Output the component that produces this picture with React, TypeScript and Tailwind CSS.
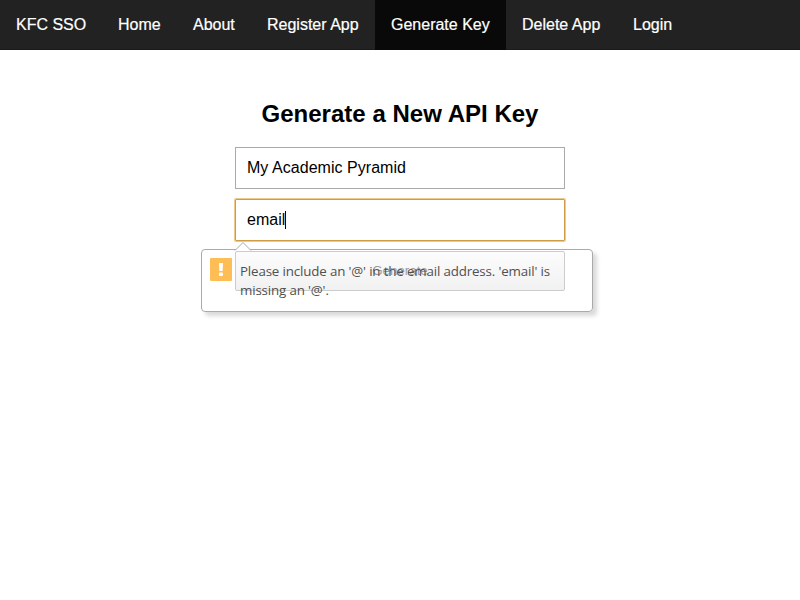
const links = [
  { label: "KFC SSO", size: "w-[102px]" },
  { label: "Home", size: "w-[75px]" },
  { label: "About", size: "w-[74px]" },
  { label: "Register App", size: "w-[124px]" },
  { label: "Generate Key", size: "w-[131px]", active: true },
  { label: "Delete App", size: "w-[111px]" },
  { label: "Login", size: "w-[72px]" },
];

function NavBar() {
  return (
    <nav className="flex h-[50px] border-b border-[#1b1b1b] bg-[#222] text-[16px] leading-[50px] text-white">
      {links.map((link) => (
        <a
          key={link.label}
          className={`h-[50px] shrink-0 pl-4 whitespace-nowrap [-webkit-text-stroke:0.2px_white] ${link.size} ${link.active ? "bg-[#090909]" : ""}`}
        >
          {link.label}
        </a>
      ))}
    </nav>
  );
}

function ValidationBubble() {
  return (
    <div className="absolute top-[50px] -left-[34px] h-[63px] w-[392px] rounded-[4px] border border-[#aaa] bg-white/60 shadow-[4px_4px_4px_rgba(0,0,0,0.15)]">
      <svg className="absolute -top-[9px] left-[32px]" width="18" height="10" viewBox="0 0 18 10">
        <path d="M1 9.5 9 1.5 17 9.5V10H1Z" fill="#fff" />
        <path d="M1 9.5 9 1.5 17 9.5" fill="none" stroke="#aaa" />
      </svg>
      <div className="flex pt-2 pl-2">
        <svg className="shrink-0" width="22" height="23" viewBox="0 0 22 23">
          <rect width="22" height="23" rx="1" fill="#ffbd55" />
          <path d="M9 5h4l-.4 8h-3.2Z" fill="#fff" />
          <rect x="9" y="14.5" width="4" height="3.5" rx="1" fill="#fff" />
        </svg>
        <p className="ml-2 pt-1 font-['Open_Sans',sans-serif] text-[13.33px] leading-[19px] font-normal tracking-[-0.15px] whitespace-nowrap text-[#505050]">
          Please include an '@' in the email address. 'email' is
          <br />
          missing an '@'.
        </p>
      </div>
    </div>
  );
}

export default function App() {
  return (
    <div className="h-[600px] bg-white font-['Liberation_Sans',Arial,sans-serif] text-black">
      <NavBar />
      <main className="mx-auto w-[330px] pt-[50px]">
        <h1 className="text-center text-[24px] leading-[28px] font-bold tracking-[0.02px] whitespace-nowrap">Generate a New API Key</h1>
        <form className="mt-[19px]">
          <div className="h-[42px] border border-[#a9a9a9] pl-[11px] text-[16px] leading-[40px] tracking-[0.04px]">My Academic Pyramid</div>
          <div className="relative mt-[10px]">
            <div className="flex h-[42px] items-center rounded-[1px] border border-[#cf9c45] pl-[11px] text-[16px] shadow-[0_0_0_1px_#efc98a]">
              email
              <span className="h-[18px] w-px bg-black" />
            </div>
            <div className="mt-[10px] h-[40px] rounded-[2px] border border-[#808080] bg-linear-to-b from-[#f8f8f8] to-[#ddd] text-center text-[13.33px] leading-[38px]">
              Generate
            </div>
            <ValidationBubble />
          </div>
        </form>
      </main>
    </div>
  );
}
